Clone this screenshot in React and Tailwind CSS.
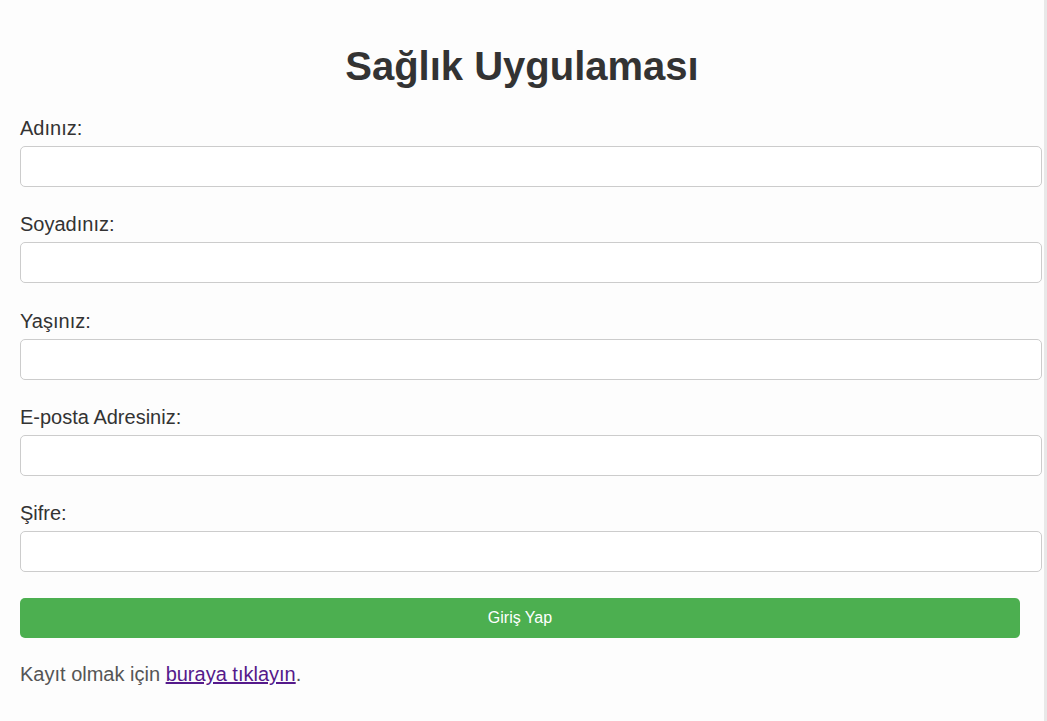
const fields = [
  { id: "ad", label: "Adınız:", type: "text" },
  { id: "soyad", label: "Soyadınız:", type: "text" },
  { id: "yas", label: "Yaşınız:", type: "number" },
  { id: "email", label: "E-posta Adresiniz:", type: "email" },
  { id: "sifre", label: "Şifre:", type: "password" },
]

export default function App() {
  return (
    <div className="flex h-[721px] w-[1047px] overflow-hidden bg-[#fdfdfd] font-['Liberation_Sans',Arial,sans-serif] text-[#333]">
      <div className="w-[1044px] px-[20px]">
        <h1 className="mt-[44px] mb-[28px] text-center text-[40px] font-bold leading-[45px]">
          Sağlık Uygulaması
        </h1>

        <form className="w-[1000px]" onSubmit={(e) => e.preventDefault()}>
          {fields.map((f) => (
            <div key={f.id} className="mb-[26.3px]">
              <label htmlFor={f.id} className="mb-[7px] block text-[20px] leading-[22px]">
                {f.label}
              </label>
              <input
                id={f.id}
                type={f.type}
                className="block h-[41px] w-[1022px] rounded-[5px] border border-[#ccc] bg-white px-[12px] outline-none"
              />
            </div>
          ))}

          <button
            type="submit"
            className="block h-[40px] w-[1000px] rounded-[5px] bg-[#4caf50] text-[16px] text-white"
          >
            Giriş Yap
          </button>
        </form>

        <p className="mt-[25px] text-[20px] leading-[22px] text-[#555]">
          Kayıt olmak için{" "}
          <a href="#" className="text-[#551a8b] underline">
            buraya tıklayın
          </a>
          .
        </p>
      </div>
      <div className="w-[3px] bg-[#e8e8e8]" />
    </div>
  )
}
